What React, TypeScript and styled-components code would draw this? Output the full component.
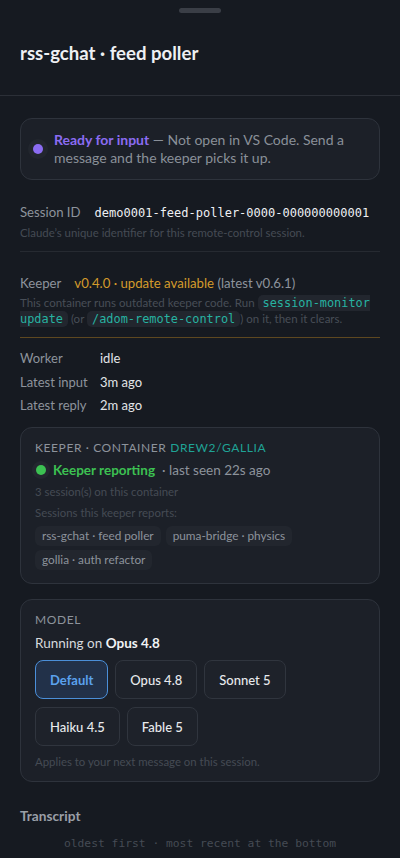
import React from 'react'
import styled, { createGlobalStyle } from 'styled-components'

const GlobalStyle = createGlobalStyle`
  html, body {
    margin: 0;
    padding: 0;
    background: #161a21;
  }
  body {
    font-family: Lato, Inter, "Noto Sans", sans-serif;
    color: #e6e8eb;
    -webkit-font-smoothing: antialiased;
  }
`

const mono = `"DejaVu Sans Mono", "Liberation Mono", monospace`

const Sheet = styled.div`
  width: 400px;
  min-height: 858px;
  background: #161a21;
  overflow: hidden;
`

const Handle = styled.div`
  width: 42px;
  height: 5px;
  border-radius: 3px;
  background: #3a3e46;
  margin: 8px auto 0;
`

const Header = styled.div`
  padding: 29px 20px 31px;
  border-bottom: 1px solid #2b2f37;
`

const Title = styled.h1`
  margin: 0;
  font-size: 18.6px;
  font-weight: 700;
  line-height: 22px;
  color: #eef0f3;
`

const Body = styled.div`
  padding: 22px 20px 0;
`

const Card = styled.div<{ $pad?: string }>`
  background: #1c2028;
  border: 1px solid #2e333c;
  border-radius: 12px;
  padding: ${(p) => p.$pad || '14px 14px'};
`

const StatusCard = styled(Card)`
  display: flex;
  align-items: center;
  gap: 11px;
  padding: 12px 12px 12px 12px;
`

const Dot = styled.span<{ $color: string }>`
  flex: none;
  width: 10px;
  height: 10px;
  border-radius: 50%;
  background: ${(p) => p.$color};
  box-shadow: 0 0 0 5px #22262e;
`

const StatusText = styled.div`
  font-size: 14px;
  line-height: 18px;
  color: #8a9099;
`

const Strong = styled.span<{ $color: string }>`
  color: ${(p) => p.$color};
  font-weight: 700;
`

const Row = styled.div<{ $gap?: number }>`
  display: flex;
  align-items: baseline;
  gap: ${(p) => p.$gap ?? 10}px;
  font-size: 13.2px;
  line-height: 20px;
  white-space: nowrap;
`

const Label = styled.span`
  color: #8d939c;
`

const Value = styled.span`
  color: #e2e5e8;
`

const MonoValue = styled.span`
  font-family: ${mono};
  font-size: 12px;
  color: #eef0f3;
`

const Help = styled.div`
  font-size: 11.4px;
  line-height: 16px;
  color: #454b54;
  margin-top: 2px;
`

const Section = styled.div<{ $line: string }>`
  padding: 21px 0 10px;
  border-bottom: 1px solid ${(p) => p.$line};
`

const SessionSection = styled(Section)`
  padding: 22px 0 10px;
`

const Amber = styled.span`
  color: #d49a2b;
`

const HelpBlock = styled.div`
  font-size: 11.5px;
  line-height: 16px;
  color: #484e57;
  margin-top: 2px;
`

const Code = styled.code`
  font-family: ${mono};
  font-size: 11.9px;
  color: #27b3a2;
  background: #22262e;
  border-radius: 5px;
  padding: 1px 5px;
`

const Facts = styled.div`
  display: grid;
  grid-template-columns: 80px 1fr;
  row-gap: 3.5px;
  padding: 10px 0 12px;
  font-size: 13px;
  line-height: 20px;
`

const Kicker = styled.div`
  font-size: 12px;
  letter-spacing: 0.6px;
  text-transform: uppercase;
  color: #8d939c;
  line-height: 18px;
`

const Teal = styled.span`
  color: #1fa396;
`

const ReportRow = styled.div`
  display: flex;
  align-items: center;
  gap: 7px;
  margin-top: 3px;
  font-size: 13.5px;
  line-height: 20px;
  color: #8d939c;
`

const SmallDot = styled(Dot)`
  margin-left: 1px;
  box-shadow: 0 0 0 4px #23272f;
`

const Dim = styled.div<{ $mt?: number }>`
  font-size: 11.4px;
  line-height: 16px;
  color: #454b54;
  margin-top: ${(p) => p.$mt ?? 0}px;
`

const Chips = styled.div`
  display: flex;
  flex-wrap: wrap;
  gap: 4px 5px;
  margin-top: 5px;
`

const Chip = styled.span`
  font-size: 11.8px;
  line-height: 20px;
  padding: 0 7px;
  background: #22262e;
  border-radius: 6px;
  color: #8d939c;
`

const Running = styled.div`
  font-size: 13.5px;
  line-height: 20px;
  color: #d6d9dd;
  margin-top: 4px;
  b {
    color: #f1f3f5;
    font-weight: 700;
  }
`

const Options = styled.div`
  display: flex;
  flex-wrap: wrap;
  gap: 8px 7px;
  margin: 7px 0 8px;
`

const Option = styled.button<{ $active?: boolean }>`
  font-family: Lato, Inter, "Noto Sans", sans-serif;
  font-size: 13px;
  height: 39px;
  padding: 0 14px;
  border-radius: 8px;
  cursor: pointer;
  border: 1px solid ${(p) => (p.$active ? '#4b8fd9' : '#30353e')};
  background: ${(p) => (p.$active ? '#223149' : '#1e222a')};
  color: ${(p) => (p.$active ? '#5ba2ee' : '#e8eaed')};
  font-weight: ${(p) => (p.$active ? 700 : 500)};
`

const Gap = styled.div`
  height: 15px;
`

const TranscriptTitle = styled.div`
  margin-top: 26px;
  font-size: 13.7px;
  line-height: 16px;
  font-weight: 700;
  color: #9a9fa7;
`

const TranscriptNote = styled.div`
  margin-top: 13px;
  text-align: center;
  font-family: ${mono};
  font-size: 11.3px;
  line-height: 14px;
  color: #454b54;
`

const models = ['Default', 'Opus 4.8', 'Sonnet 5', 'Haiku 4.5', 'Fable 5']
const sessions = ['rss-gchat · feed poller', 'puma-bridge · physics', 'gollia · auth refactor']

export default function App() {
  return (
    <Sheet>
      <GlobalStyle />
      <Handle />
      <Header>
        <Title>rss-gchat · feed poller</Title>
      </Header>
      <Body>
        <StatusCard>
          <Dot $color="#8b6cf2" />
          <StatusText>
            <Strong $color="#8b6cf2">Ready for input</Strong> — Not open in VS Code. Send a message and the keeper picks it up.
          </StatusText>
        </StatusCard>

        <SessionSection $line="#262a31">
          <Row $gap={14}>
            <Label>Session ID</Label>
            <MonoValue>demo0001-feed-poller-0000-000000000001</MonoValue>
          </Row>
          <Help>Claude’s unique identifier for this remote-control session.</Help>
        </SessionSection>

        <Section $line="#5e4820">
          <Row $gap={13}>
            <Label>Keeper</Label>
            <span>
              <Amber>v0.4.0 · update available</Amber> <Label>(latest v0.6.1)</Label>
            </span>
          </Row>
          <HelpBlock>
            This container runs outdated keeper code. Run <Code>session-monitor update</Code> (or{' '}
            <Code>/adom-remote-control</Code>) on it, then it clears.
          </HelpBlock>
        </Section>

        <Facts>
          <Label>Worker</Label>
          <Value>idle</Value>
          <Label>Latest input</Label>
          <Value>3m ago</Value>
          <Label>Latest reply</Label>
          <Value>2m ago</Value>
        </Facts>

        <Card $pad="11px 14px 13px">
          <Kicker>
            Keeper · Container <Teal>drew2/gallia</Teal>
          </Kicker>
          <ReportRow>
            <SmallDot $color="#3cc152" />
            <Strong $color="#3cc152">Keeper reporting</Strong>
            <span>· last seen 22s ago</span>
          </ReportRow>
          <Dim $mt={4}>3 session(s) on this container</Dim>
          <Dim $mt={5}>Sessions this keeper reports:</Dim>
          <Chips>
            {sessions.map((s) => (
              <Chip key={s}>{s}</Chip>
            ))}
          </Chips>
        </Card>

        <Gap />

        <Card $pad="11px 14px 11px">
          <Kicker>Model</Kicker>
          <Running>
            Running on <b>Opus 4.8</b>
          </Running>
          <Options>
            {models.map((m) => (
              <Option key={m} $active={m === 'Default'}>
                {m}
              </Option>
            ))}
          </Options>
          <Dim>Applies to your next message on this session.</Dim>
        </Card>

        <TranscriptTitle>Transcript</TranscriptTitle>
        <TranscriptNote>oldest first · most recent at the bottom</TranscriptNote>
      </Body>
    </Sheet>
  )
}
